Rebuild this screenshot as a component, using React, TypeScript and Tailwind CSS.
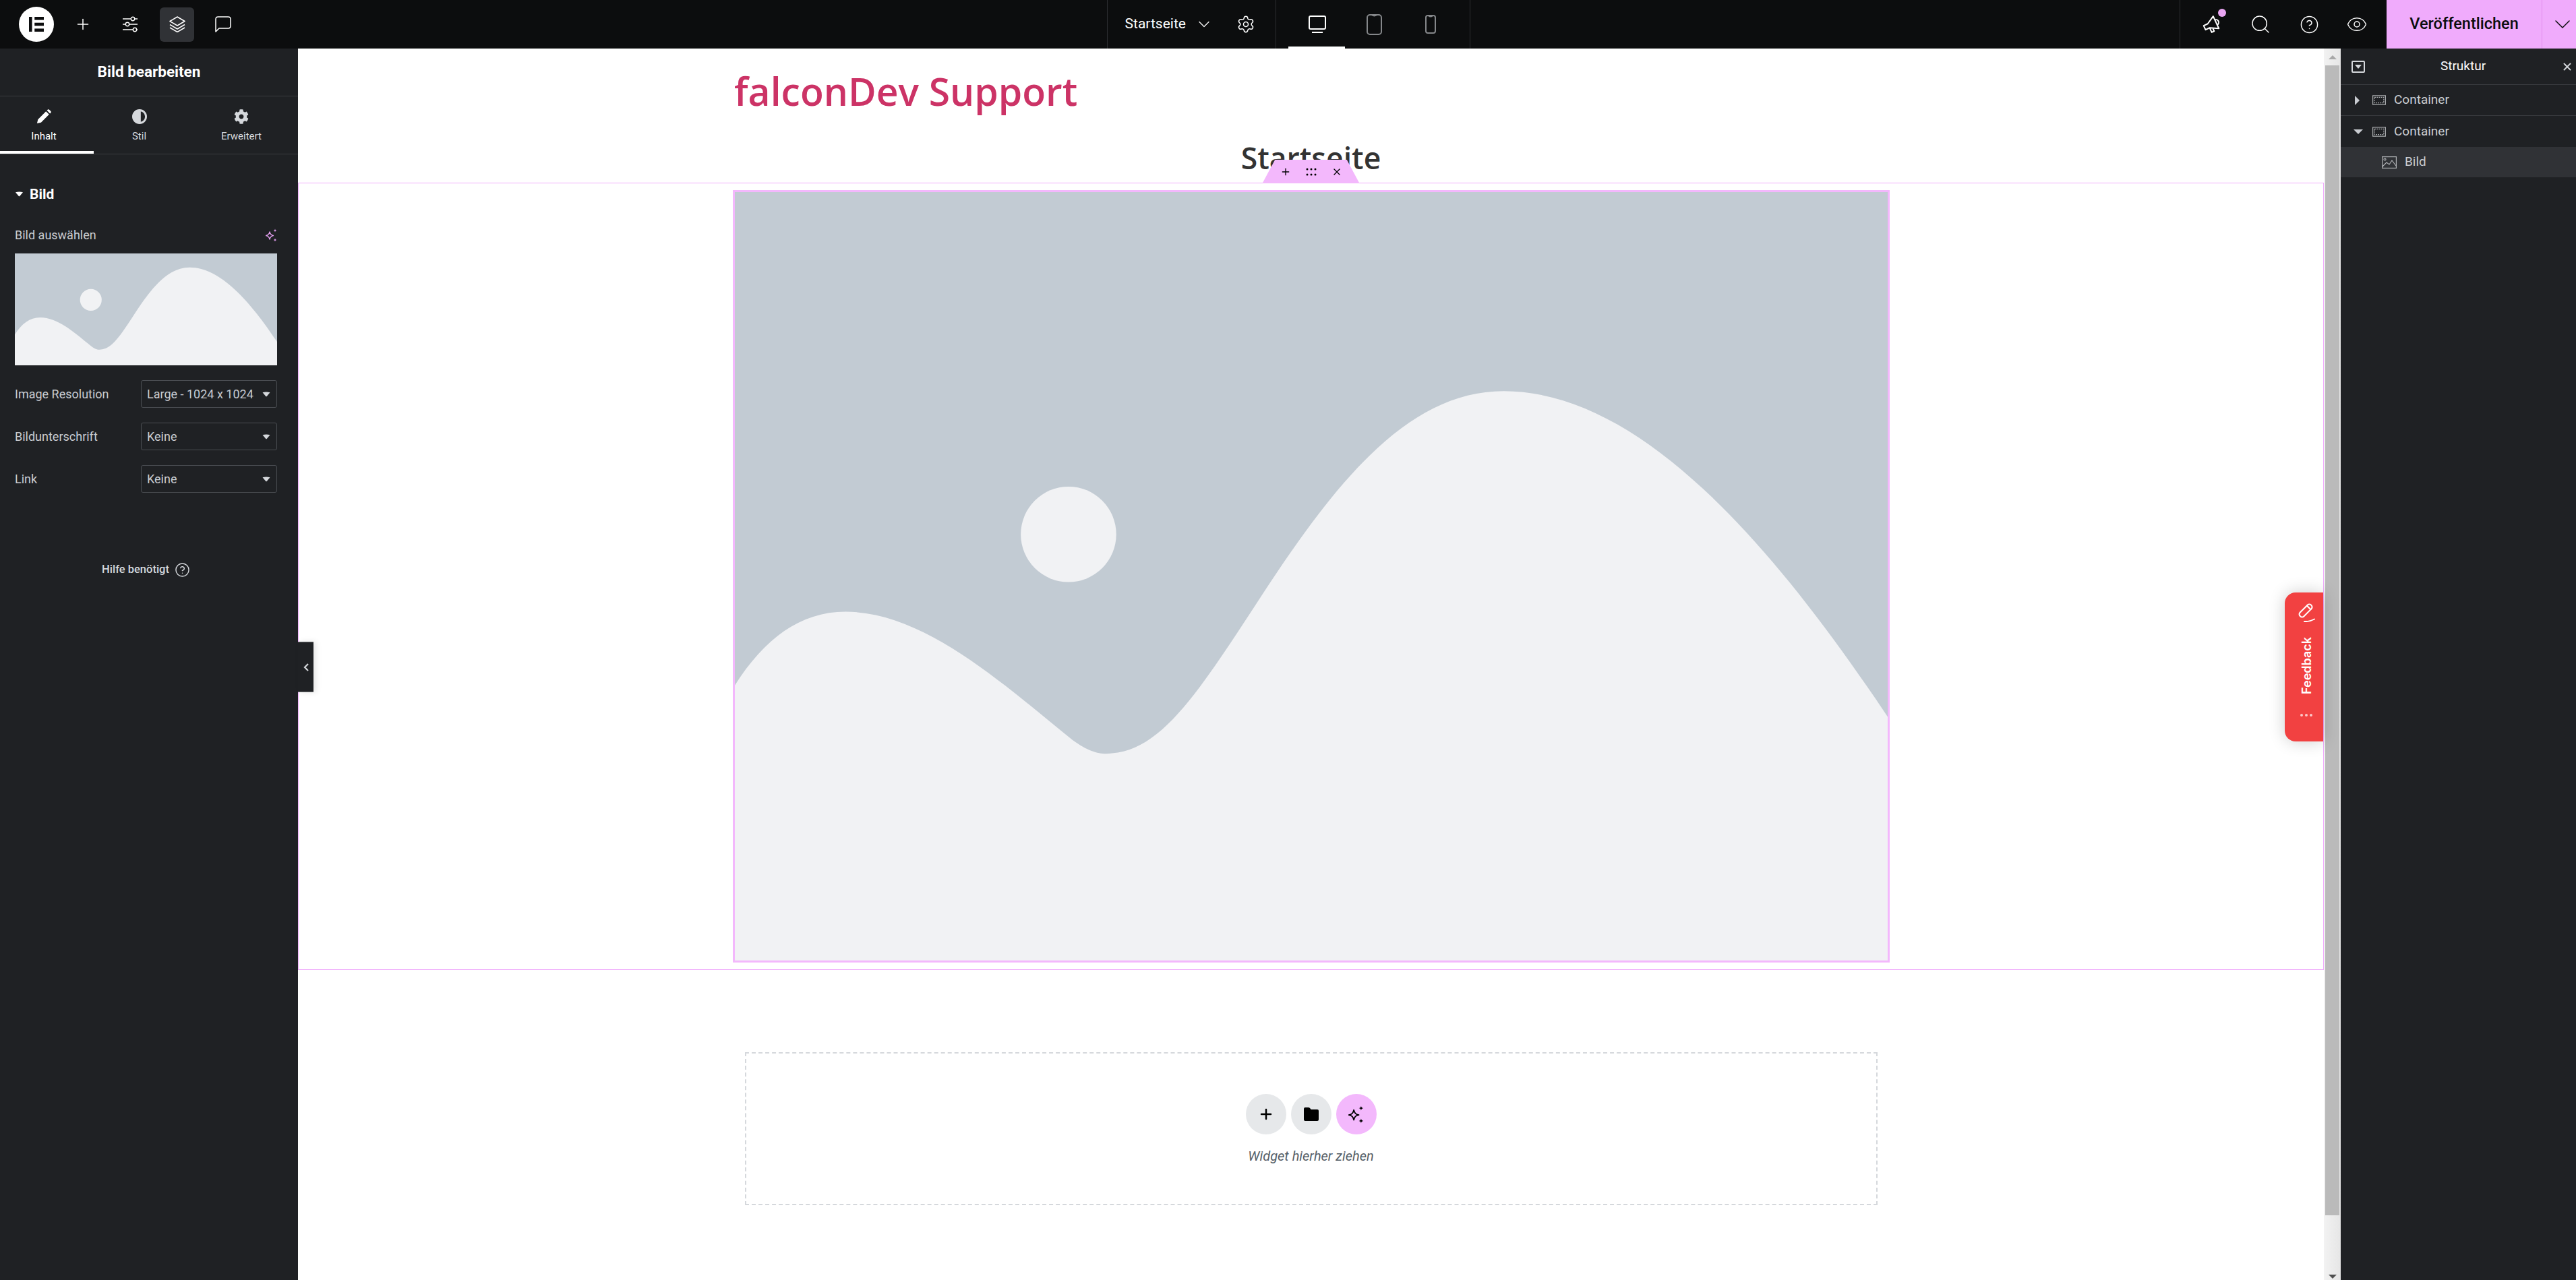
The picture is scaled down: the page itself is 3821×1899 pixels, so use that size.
import React from 'react';
import { ChevronDown, Settings, Search, CircleHelp, Eye, Plus, X } from 'lucide-react';
import { FaCog } from 'react-icons/fa';

function Sparkle({ className }: { className?: string }) {
    return (
        <svg viewBox="4 1.500 17 20" className={className} fill="none">
            <path d="M10 6.500c.8 3.600 2 4.900 5.500 5.500-3.500.6-4.700 1.900-5.500 5.500-.8-3.600-2-4.900-5.500-5.500 3.500-.6 4.700-1.900 5.500-5.500z" stroke="currentColor" strokeWidth="1.300" strokeLinejoin="round" />
            <path d="M18 2c.3 1.600.9 2.200 2.500 2.500-1.600.3-2.200.9-2.500 2.500-.3-1.600-.9-2.200-2.500-2.500 1.600-.3 2.200-.9 2.500-2.500zM18 16c.3 1.600.9 2.200 2.500 2.500-1.600.3-2.200.9-2.500 2.500-.3-1.600-.9-2.200-2.500-2.500 1.600-.3 2.200-.9 2.500-2.500z" fill="currentColor" />
        </svg>
    );
}

function Placeholder({ className }: { className?: string }) {
    return (
        <svg viewBox="0 0 702 467" preserveAspectRatio="xMidYMid slice" className={className}>
            <rect width="702" height="467" fill="#c2cbd3" />
            <circle cx="203.500" cy="208" r="29" fill="#f1f2f4" />
            <path d="M0 301C18 272 40 255 68 255C118 255 168 303 206 333C217 341 224 342 230 341C261 339 285 300 321 245C366 176 410 121 468 121C550 121 630 212 702 320V467H0Z" fill="#f1f2f4" />
        </svg>
    );
}

function Caret({ className }: { className?: string }) {
    return (
        <svg viewBox="0 0 12 8" className={className} fill="currentColor">
            <path d="M0.500 1.200Q6 0 11.500 1.200L6.500 7.200Q6 7.500 5.500 7.200Z" />
        </svg>
    );
}

function SelectRow({ label, value }: { label: string; value: string }) {
    return (
        <div className="flex items-center justify-between">
            <span className="text-[18px] text-[#c9ccd1]">{label}</span>
            <div className="flex h-[41px] w-[202px] items-center justify-between rounded-[3px] border border-[#4a4d52] pl-[8px] pr-[9px] text-[18px] text-[#c9ccd1]">
                <span>{value}</span>
                <Caret className="h-[8px] w-[12px] text-[#d5d8dc]" />
            </div>
        </div>
    );
}

function TopBar() {
    return (
        <header className="flex h-[72px] shrink-0 items-center bg-[#0c0d0e] text-white">
            <div className="flex h-full w-[1642px] items-center pl-[28px]">
                <div className="flex h-[52px] w-[52px] items-center justify-center rounded-full bg-white">
                    <svg viewBox="0 0 24 24" className="h-[22px] w-[22px]" fill="#0c0d0e">
                        <rect x="0" y="0" width="5" height="24" />
                        <rect x="9" y="0" width="15" height="5" />
                        <rect x="9" y="9.500" width="15" height="5" />
                        <rect x="9" y="19" width="15" height="5" />
                    </svg>
                </div>
                <Plus className="ml-[30px] h-[26px] w-[26px]" strokeWidth={1.400} />
                <svg viewBox="0 0 24 24" className="ml-[45px] h-[24px] w-[24px]" fill="none" stroke="currentColor" strokeWidth="1.400">
                    <path d="M1 4h12M19 4h4M1 12h4M11 12h12M1 20h15M22 20h1" />
                    <circle cx="16" cy="4" r="2.700" />
                    <circle cx="8" cy="12" r="2.700" />
                    <circle cx="19" cy="20" r="2.700" />
                </svg>
                <div className="ml-[32px] flex h-[51px] w-[51px] items-center justify-center rounded-[6px] bg-[#303236]">
                    <svg viewBox="0 0 24 24" className="h-[24px] w-[24px]" fill="none" stroke="currentColor" strokeWidth="1.500" strokeLinejoin="round">
                        <path d="M12 1L23 7.500L12 14L1 7.500Z" />
                        <path d="M1 12.500L12 19L23 12.500M1 17L12 23.500L23 17" />
                    </svg>
                </div>
                <svg viewBox="0 0 24 24" className="ml-[31px] h-[24px] w-[24px]" fill="none" stroke="currentColor" strokeWidth="1.500" strokeLinejoin="round">
                    <path d="M1 4.500C1 2.500 2.500 1 4.500 1H19.500C21.500 1 23 2.500 23 4.500V14.500C23 16.500 21.500 18 19.500 18H6L1 23Z" />
                </svg>
            </div>
            <div className="flex h-full w-[250px] items-center border-l border-[#2d2e31] pl-[26px]">
                <span className="w-[92px] text-[21px] whitespace-nowrap">Startseite</span>
                <ChevronDown className="ml-[11px] h-[28px] w-[28px]" strokeWidth={1.100} />
                <Settings className="ml-[34px] h-[28px] w-[28px]" strokeWidth={1.300} />
            </div>
            <div className="relative flex h-full w-[289px] items-center border-l border-[#2d2e31] pl-[48px]">
                <svg viewBox="0 0 26 26" className="h-[26px] w-[26px]" fill="none" stroke="currentColor" strokeWidth="2">
                    <rect x="1" y="1" width="24" height="19" rx="2" />
                    <path d="M5 25h16" />
                </svg>
                <svg viewBox="0 0 23 31" className="ml-[60px] h-[31px] w-[23px] text-[#85878a]" fill="none" stroke="currentColor" strokeWidth="2">
                    <rect x="1" y="1" width="21" height="29" rx="4" />
                    <path d="M8 1.500Q11.500 3.500 15 1.500" />
                </svg>
                <svg viewBox="0 0 16 28" className="ml-[64px] h-[28px] w-[16px] text-[#85878a]" fill="none" stroke="currentColor" strokeWidth="2">
                    <rect x="1" y="1" width="14" height="26" rx="3" />
                    <path d="M5 1.500Q8 3.500 11 1.500" />
                </svg>
                <div className="absolute bottom-0 left-[18px] h-[3px] w-[84px] bg-white" />
            </div>
            <div className="h-full w-[1053px] border-l border-[#2d2e31]" />
            <div className="flex h-full w-[307px] items-center border-l border-[#2d2e31] pl-[11px]">
                <div className="flex w-[72px] justify-center">
                    <div className="relative h-[32px] w-[32px]">
                        <svg viewBox="0 0 24 24" className="h-[32px] w-[32px] -rotate-[25deg]" fill="none" stroke="currentColor" strokeWidth="1.500" strokeLinejoin="round">
                            <path d="M3 9.500v5h5l9 5V4.500l-9 5H3zM8 14.500v5.500h3v-4M17 9a3 3 0 0 1 0 6" />
                        </svg>
                        <div className="absolute right-[-5px] top-[-7px] h-[12px] w-[12px] rounded-full bg-[#e9a5f2]" />
                    </div>
                </div>
                <div className="flex w-[72px] justify-center">
                    <Search className="h-[32px] w-[32px]" strokeWidth={1.100} />
                </div>
                <div className="flex w-[72px] justify-center">
                    <CircleHelp className="h-[29px] w-[29px]" strokeWidth={1.200} />
                </div>
                <div className="flex w-[70px] justify-center">
                    <Eye className="h-[32px] w-[32px]" strokeWidth={1.100} />
                </div>
            </div>
            <div className="flex h-full w-[230px] items-center justify-center bg-[#f0abfc] text-[23.500px] font-medium text-[#0c0d0e]">
                Veröffentlichen
            </div>
            <div className="flex h-full flex-1 items-center justify-center border-l border-[#e08cec] bg-[#f0abfc] pl-[10px] text-[#0c0d0e]">
                <ChevronDown className="h-[40px] w-[40px]" strokeWidth={0.900} />
            </div>
        </header>
    );
}

function LeftPanel() {
    return (
        <aside className="flex w-[442px] shrink-0 flex-col bg-[#1f2124] text-white">
            <div className="flex h-[71px] items-center justify-center border-b border-[#3a3c40] text-[22.500px] font-bold">
                Bild bearbeiten
            </div>
            <div className="flex h-[86px] border-b border-[#3a3c40]">
                <div className="flex w-[139px] flex-col items-center border-b-[4px] border-white pr-[9px] pt-[19px] text-[15px]">
                    <svg viewBox="0 0 24 24" className="h-[22px] w-[22px]" fill="currentColor">
                        <path d="M1 23l1.500-6.500L15.500 3.500l5 5L7.500 21.500ZM17 2l1.500-1.500Q19.500 0 20.500 .5l3 3Q24 4.500 23.500 5.500L22 7Z" />
                    </svg>
                    <span className="mt-[7px]">Inhalt</span>
                </div>
                <div className="flex w-[135px] flex-col items-center pt-[19px] text-[15px] text-[#d5d8dc]">
                    <svg viewBox="0 0 24 24" className="h-[22px] w-[22px]" fill="currentColor">
                        <path fillRule="evenodd" d="M12 0a12 12 0 1 0 0 24 12 12 0 0 0 0-24zm2 3.500v17a8.700 8.700 0 0 0 0-17z" />
                    </svg>
                    <span className="mt-[7px]">Stil</span>
                </div>
                <div className="flex flex-1 flex-col items-center pt-[19px] text-[15px] text-[#d5d8dc]">
                    <FaCog className="h-[22px] w-[22px]" />
                    <span className="mt-[7px]">Erweitert</span>
                </div>
            </div>
            <div className="flex flex-col pl-[22px] pr-[31px] pt-[45px]">
                <div className="flex items-center gap-[9px] text-[21px] font-bold leading-[28px]">
                    <Caret className="h-[8px] w-[13px]" />
                    Bild
                </div>
                <div className="mt-[35px] flex items-center justify-between text-[18px] leading-[24px] text-[#c9ccd1]">
                    <span>Bild auswählen</span>
                    <Sparkle className="h-[20px] w-[17px] text-[#e39ff0]" />
                </div>
                <Placeholder className="mt-[15px] h-[166px] w-full" />
                <div className="mt-[22px] flex flex-col gap-[22px]">
                    <SelectRow label="Image Resolution" value="Large - 1024 x 1024" />
                    <SelectRow label="Bildunterschrift" value="Keine" />
                    <SelectRow label="Link" value="Keine" />
                </div>
                <div className="mt-[102px] flex items-center justify-center gap-[8px] text-[16.500px] font-medium text-[#d5d8dc]">
                    Hilfe benötigt
                    <CircleHelp className="h-[23px] w-[23px]" strokeWidth={1.500} />
                </div>
            </div>
        </aside>
    );
}

function Canvas() {
    return (
        <main className="relative flex flex-1 flex-col bg-white">
            <div className="h-[199px] shrink-0 font-['Open_Sans',sans-serif]">
                <div className="ml-[647px] pt-[27px] text-[57px] font-semibold leading-[72px] text-[#cc3366]">falconDev Support</div>
                <div className="mt-[33px] text-center text-[44.500px] font-semibold leading-[60px] text-[#333333]">Startseite</div>
            </div>
            <section className="relative flex h-[1168px] shrink-0 justify-center border border-[#f0abfc] pt-[10px]">
                <div className="h-[1146px] w-[1716px] border-[3px] border-[#f3b8fc]">
                    <Placeholder className="h-full w-full" />
                </div>
                <div className="absolute left-1/2 top-[-35px] flex h-[35px] w-[144px] -translate-x-1/2 items-center justify-center gap-[22px] bg-[#f3b8fc] text-black [clip-path:polygon(13%_0,87%_0,100%_100%,0_100%)]">
                    <Plus className="h-[16px] w-[16px]" strokeWidth={2} />
                    <svg viewBox="0 0 16 12" className="h-[12px] w-[16px]" fill="currentColor">
                        <circle cx="2" cy="2" r="1.500" /><circle cx="8" cy="2" r="1.500" /><circle cx="14" cy="2" r="1.500" />
                        <circle cx="2" cy="10" r="1.500" /><circle cx="8" cy="10" r="1.500" /><circle cx="14" cy="10" r="1.500" />
                    </svg>
                    <X className="h-[16px] w-[16px]" strokeWidth={2} />
                </div>
            </section>
            <div className="mx-auto mt-[122px] flex h-[227px] w-[1680px] shrink-0 flex-col items-center border-2 border-dashed border-[#d5d8dc] pt-[60px]">
                <div className="flex gap-[7px]">
                    <div className="flex h-[60px] w-[60px] items-center justify-center rounded-full bg-[#e6e8ea] text-black">
                        <Plus className="h-[24px] w-[24px]" strokeWidth={2.500} />
                    </div>
                    <div className="flex h-[60px] w-[60px] items-center justify-center rounded-full bg-[#e6e8ea] text-black">
                        <svg viewBox="0 0 22 20" className="h-[20px] w-[22px]" fill="currentColor">
                            <path d="M2 0h5q1.500 0 2.500 1.500L10.500 3H20q2 0 2 2v13q0 2-2 2H2q-2 0-2-2V2q0-2 2-2z" />
                        </svg>
                    </div>
                    <div className="flex h-[60px] w-[60px] items-center justify-center rounded-full bg-[#f3b8fc] text-black">
                        <Sparkle className="h-[27px] w-[23px]" />
                    </div>
                </div>
                <div className="mt-[17px] text-[20px] italic text-[#556068]">Widget hierher ziehen</div>
            </div>
            <div className="absolute left-0 top-[880px] flex h-[75px] w-[23px] items-center justify-center border-y border-[#6b6d70] bg-[#1f2124] text-[#d5d8dc] shadow-[4px_0_8px_rgba(0,0,0,0.1)]">
                <svg viewBox="0 0 8 12" className="h-[12px] w-[8px]" fill="none" stroke="currentColor" strokeWidth="2.200">
                    <path d="M7 1L2 6l5 5" />
                </svg>
            </div>
            <div className="absolute right-[1px] top-[807px] flex h-[221px] w-[57px] flex-col items-center rounded-l-[16px] bg-[#f24141] pl-[7px] pt-[16px] text-white shadow-[0_0_24px_rgba(0,0,0,0.2)]">
                <svg viewBox="0 0 30 28" className="h-[28px] w-[30px]" fill="none" stroke="currentColor" strokeWidth="2" strokeLinecap="round">
                    <g transform="rotate(45 13 12)">
                        <rect x="9" y="-1" width="8" height="23" rx="3.500" />
                        <path d="M9 4h8" />
                    </g>
                    <path d="M12 27Q20 27.500 27 23.500" />
                </svg>
                <div className="mt-[22px] flex h-[84px] items-center justify-center">
                    <span className="-rotate-90 text-[18px] font-semibold font-['Inter',sans-serif]">Feedback</span>
                </div>
                <div className="mt-[30px] flex gap-[3px]">
                    <div className="h-[4px] w-[4px] rounded-full bg-white/70" />
                    <div className="h-[4px] w-[4px] rounded-full bg-white/70" />
                    <div className="h-[4px] w-[4px] rounded-full bg-white/70" />
                </div>
            </div>
        </main>
    );
}

function Scrollbar() {
    return (
        <div className="flex w-[25px] shrink-0 flex-col items-center bg-gradient-to-r from-[#f2f2f2] to-[#e6e6e6]">
            <div className="flex h-[25px] items-center">
                <div className="h-0 w-0 border-x-[6px] border-b-[6px] border-x-transparent border-b-[#a8a8a8]" />
            </div>
            <div className="h-[1706px] w-[21px] bg-[#bababa]" />
            <div className="flex-1" />
            <div className="mb-[2px] h-0 w-0 border-x-[6px] border-t-[6px] border-x-transparent border-t-[#505050]" />
        </div>
    );
}

function TreeRow({ children, className }: { children: React.ReactNode; className?: string }) {
    return <div className={`flex items-center text-[19px] text-[#c9ccd1] ${className ?? ''}`}>{children}</div>;
}

function ContainerIcon() {
    return (
        <svg viewBox="0 0 22 16" className="h-[15px] w-[20px] text-[#b0b2b5]" fill="none" stroke="currentColor" strokeWidth="1.300">
            <rect x="0.700" y="0.700" width="20.600" height="14.600" />
            <rect x="3.500" y="3.500" width="15" height="9" strokeDasharray="2 1.500" />
        </svg>
    );
}

function StructurePanel() {
    return (
        <aside className="flex w-[349px] shrink-0 flex-col bg-[#1f2124] text-white">
            <div className="flex h-[54px] shrink-0 items-center border-b border-[#3a3c40] pl-[16px] pr-[4px]">
                <svg viewBox="0 0 20 18" className="h-[18px] w-[20px] text-[#d5d8dc]" fill="none" stroke="currentColor" strokeWidth="2">
                    <rect x="1" y="1" width="18" height="16" rx="1" />
                    <path d="M5 6h10l-5 6z" fill="currentColor" stroke="none" />
                </svg>
                <span className="flex-1 text-center text-[19px]">Struktur</span>
                <X className="h-[18px] w-[18px] text-[#d5d8dc]" strokeWidth={2.500} />
            </div>
            <TreeRow className="h-[46px] border-b border-[#3a3c40] pl-[21px]">
                <div className="mr-[19px] h-0 w-0 border-y-[7px] border-l-[7px] border-y-transparent border-l-[#c9ccd1]" />
                <ContainerIcon />
                <span className="ml-[12px]">Container</span>
            </TreeRow>
            <TreeRow className="h-[46px] pl-[19px]">
                <div className="mr-[14px] h-0 w-0 border-x-[7px] border-t-[7px] border-x-transparent border-t-[#c9ccd1]" />
                <ContainerIcon />
                <span className="ml-[12px]">Container</span>
            </TreeRow>
            <TreeRow className="h-[45px] bg-[#303236] pl-[61px]">
                <svg viewBox="0 0 22 18" className="h-[18px] w-[22px] text-[#b0b2b5]" fill="none" stroke="currentColor" strokeWidth="1.200">
                    <rect x="0.600" y="0.600" width="20.800" height="16.800" />
                    <circle cx="4.500" cy="4.500" r="1.500" />
                    <path d="M1 15l6-6 4 3 4-6 6 8" />
                </svg>
                <span className="ml-[12px]">Bild</span>
            </TreeRow>
        </aside>
    );
}

export default function App() {
    return (
        <div className="flex h-[1899px] w-[3821px] flex-col overflow-hidden font-['Roboto',sans-serif]">
            <TopBar />
            <div className="flex min-h-0 flex-1">
                <LeftPanel />
                <Canvas />
                <Scrollbar />
                <StructurePanel />
            </div>
        </div>
    );
}
